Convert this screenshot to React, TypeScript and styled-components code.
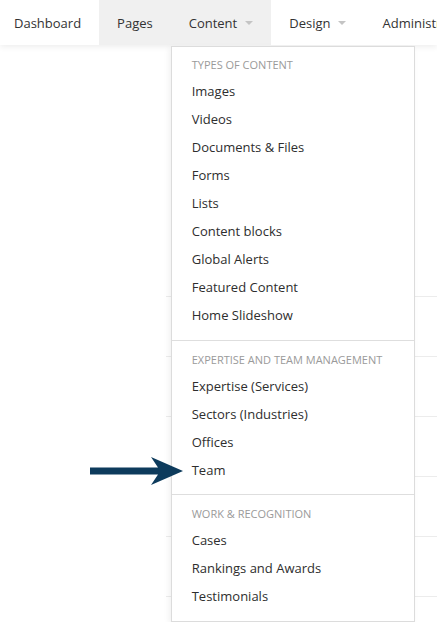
import React from "react";
import styled, { createGlobalStyle } from "styled-components";

const Global = createGlobalStyle`
  html, body { margin: 0; padding: 0; background: #fff; }
  body { font-family: "Open Sans", "Liberation Sans", sans-serif; color: #333; overflow: hidden; }
  * { box-sizing: border-box; }
`;

const Page = styled.div`
  position: relative;
  width: 437px;
  height: 622px;
  overflow: hidden;
`;

const Nav = styled.nav`
  position: relative;
  z-index: 2;
  display: flex;
  height: 45px;
  background: #fff;
  box-shadow: 0 2px 6px rgba(0, 0, 0, 0.07);
  white-space: nowrap;
`;

const NavItem = styled.div<{ $active?: boolean; $first?: boolean }>`
  position: relative;
  display: flex;
  align-items: center;
  gap: 8px;
  padding: 0 18px 0 ${(p) => (p.$first ? "14px" : "18px")};
  background: ${(p) => (p.$active ? "#f0f0f0" : "#fff")};
  font-size: 13px;
  color: #333;
  flex-shrink: 0;
`;

const Caret = styled.span`
  width: 0;
  height: 0;
  border-left: 4px solid transparent;
  border-right: 4px solid transparent;
  border-top: 4px solid #c4c4c4;
  margin-top: 1px;
`;

const Dropdown = styled.div`
  position: absolute;
  left: 0;
  top: 46px;
  width: 244px;
  background: #fff;
  border: 1px solid #dcdcdc;
  box-shadow: -2px 2px 6px rgba(0, 0, 0, 0.06);
  white-space: nowrap;
`;

const Section = styled.div<{ $bottom: number }>`
  padding: 5px 0 ${(p) => p.$bottom}px;
  & + & {
    border-top: 1px solid #dedede;
    padding-top: 6px;
  }
`;

const Header = styled.div`
  height: 25px;
  line-height: 25px;
  padding-left: 20px;
  font-size: 11px;
  color: #9a9a9a;
  text-transform: uppercase;
`;

const Item = styled.div`
  height: 28px;
  line-height: 28px;
  padding-left: 20px;
  font-size: 13px;
  color: #2e2e2e;
`;

const Body = styled.div`
  padding: 251px 0 0 166px;
`;

const Row = styled.div`
  height: 60px;
  border-top: 1px solid #ececec;
`;

const Arrow = styled.svg`
  position: absolute;
  left: 88px;
  top: 454px;
  z-index: 3;
`;

const sections = [
  {
    title: "Types of content",
    bottom: 11,
    items: [
      "Images",
      "Videos",
      "Documents & Files",
      "Forms",
      "Lists",
      "Content blocks",
      "Global Alerts",
      "Featured Content",
      "Home Slideshow",
    ],
  },
  {
    title: "Expertise and team management",
    bottom: 10,
    items: ["Expertise (Services)", "Sectors (Industries)", "Offices", "Team"],
  },
  {
    title: "Work & Recognition",
    bottom: 11,
    items: ["Cases", "Rankings and Awards", "Testimonials"],
  },
];

export default function App() {
  return (
    <Page>
      <Global />
      <Nav>
        <NavItem $first>Dashboard</NavItem>
        <NavItem $active>Pages</NavItem>
        <NavItem $active>
          Content <Caret />
          <Dropdown>
            {sections.map((s) => (
              <Section key={s.title} $bottom={s.bottom}>
                <Header>{s.title}</Header>
                {s.items.map((i) => (
                  <Item key={i}>{i}</Item>
                ))}
              </Section>
            ))}
          </Dropdown>
        </NavItem>
        <NavItem>
          Design <Caret />
        </NavItem>
        <NavItem>Administration</NavItem>
      </Nav>
      <Body>
        {[0, 1, 2, 3, 4, 5].map((r) => (
          <Row key={r} />
        ))}
      </Body>
      <Arrow width="100" height="34" viewBox="88 454 100 34">
        <polygon
          points="90,467.5 158,467.5 151,457 183,471 151,485 158,474.5 90,474.5"
          fill="#0d3b5c"
        />
      </Arrow>
    </Page>
  );
}
